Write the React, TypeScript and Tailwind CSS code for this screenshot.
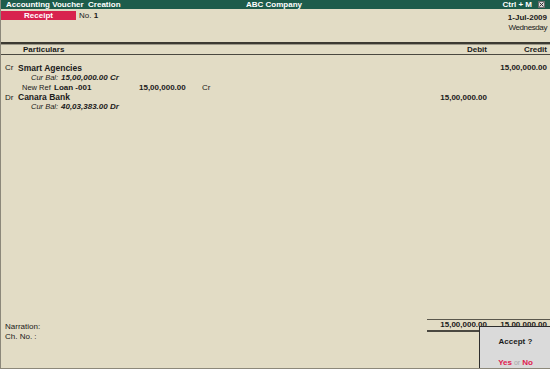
import React from 'react';

const font = "font-['Liberation_Sans',Arial,sans-serif]";

const App: React.FC = () => {
  return (
    <div className={`relative w-[550px] h-[369px] overflow-hidden bg-[#e2dcc5] text-[8px] text-[#1a1a1a] flex flex-col border-l border-b border-[#8c887a] whitespace-nowrap ${font}`}>
      {/* title bar */}
      <div className="h-[9px] bg-[#1d5c4b] text-white font-bold flex items-center px-[5px] leading-none">
        <span className="w-[240px]">Accounting Voucher&nbsp; Creation</span>
        <span className="flex-1">ABC Company</span>
        <span className="mr-[6px]">Ctrl + M</span>
        <span className="w-[7px] h-[7px] bg-[#d8d8d8] border border-[#6b6b6b] flex items-center justify-center">
          <svg width="5" height="5" viewBox="0 0 5 5">
            <path d="M0.5 0.5 L4.5 4.5 M4.5 0.5 L0.5 4.5" stroke="#333" strokeWidth="1" />
          </svg>
        </span>
      </div>

      {/* voucher header */}
      <div className="h-[33px] flex justify-between">
        <div className="flex items-start mt-[2px]">
          <div className="w-[75px] h-[9px] bg-[#d8224e] text-white font-bold flex items-center justify-center leading-none">
            Receipt
          </div>
          <div className="ml-[3px] h-[9px] flex items-center leading-none">
            No.&nbsp;<span className="font-bold">1</span>
          </div>
        </div>
        <div className="flex flex-col items-end pr-[3px] pt-[4px] leading-[10px]">
          <span className="font-bold">1-Jul-2009</span>
          <span className="tracking-[-0.4px]">Wednesday</span>
        </div>
      </div>

      {/* column header */}
      <div className="h-[2px] bg-[#3c3a32]" />
      <div className="h-[11px] border-t border-[#9c9888] border-b border-b-[#4a4840] flex items-center font-bold leading-none">
        <span className="ml-[22px] flex-1">Particulars</span>
        <span className="w-[60px] text-right">Debit</span>
        <span className="w-[63px] text-right pr-[3px]">Credit</span>
      </div>

      {/* entries */}
      <div className="pt-[8px] leading-none">
        <div className="h-[10px] flex items-center">
          <span className="ml-[4px] w-[13px] shrink-0">Cr</span>
          <span className="font-bold flex-1 text-[8.5px]">Smart Agencies</span>
          <span className="w-[60px]" />
          <span className="w-[63px] text-right pr-[3px] font-bold">15,00,000.00</span>
        </div>
        <div className="h-[10px] flex items-center italic">
          <span className="ml-[30px] w-[30px] shrink-0 text-[7.5px]">Cur Bal:</span>
          <span className="font-bold">15,00,000.00 Cr</span>
        </div>
        <div className="h-[10px] flex items-center">
          <span className="ml-[21px] w-[32px] shrink-0 text-[7.5px]">New Ref</span>
          <span className="font-bold w-[85px] shrink-0">Loan -001</span>
          <span className="font-bold w-[63px] shrink-0">15,00,000.00</span>
          <span>Cr</span>
        </div>
        <div className="h-[9px] flex items-center">
          <span className="ml-[4px] w-[13px] shrink-0">Dr</span>
          <span className="font-bold flex-1 text-[8.5px]">Canara Bank</span>
          <span className="w-[60px] text-right font-bold">15,00,000.00</span>
          <span className="w-[63px]" />
        </div>
        <div className="h-[9px] flex items-center italic">
          <span className="ml-[30px] w-[30px] shrink-0 text-[7.5px]">Cur Bal:</span>
          <span className="font-bold">40,03,383.00 Dr</span>
        </div>
      </div>

      <div className="flex-1" />

      {/* footer */}
      <div className="h-[49px] flex justify-between leading-none">
        <div className="pt-[3px] pl-[4px] flex flex-col">
          <span className="h-[10px] flex items-center">Narration:</span>
          <span className="h-[10px] flex items-center">Ch. No. :</span>
        </div>
        <div className="w-[123px] h-[13px] border-t border-[#5a574c] border-b-2 border-b-[#4a4840] flex items-center font-bold">
          <span className="w-[60px] text-right">15,00,000.00</span>
          <span className="w-[63px] text-right pr-[3px]">15,00,000.00</span>
        </div>
      </div>

      {/* accept prompt */}
      <div className="absolute left-[478px] top-[326px] w-[73px] h-[44px] bg-[#dadada] border border-[#2e2e2e] flex flex-col items-center leading-none">
        <span className="mt-[11px] font-bold">Accept ?</span>
        <span className="mt-[13px] font-bold">
          <span className="text-[#e0204f]">Yes</span>
          <span className="text-[#a8a8a8] font-normal text-[7px]"> or </span>
          <span className="text-[#e0204f]">No</span>
        </span>
      </div>
    </div>
  );
};

export default App;
